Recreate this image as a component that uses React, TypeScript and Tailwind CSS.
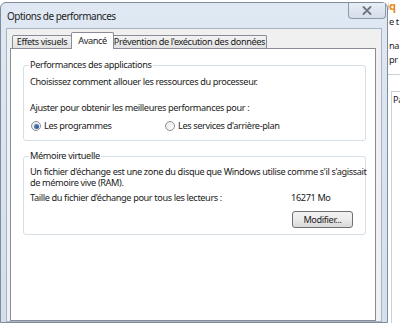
import React from 'react';

const FONT = "font-['Noto_Sans',_'DejaVu_Sans',_sans-serif]";

function Tab({ label, active, className }: { label: string; active?: boolean; className: string }) {
  if (active) {
    return (
      <div
        className={`${className} relative z-10 -mb-px h-[17px] flex items-start justify-center pt-[2px] bg-white border border-b-0 border-[#898c95] rounded-t-[2px] -mx-px whitespace-nowrap`}
      >
        {label}
      </div>
    );
  }
  return (
    <div
      className={`${className} h-[13px] flex items-center justify-center bg-gradient-to-b from-[#f3f3f3] to-[#e2e2e2] border border-b-0 border-[#898c95] rounded-t-[2px] -ml-px first:ml-0 whitespace-nowrap`}
    >
      {label}
    </div>
  );
}

function Radio({ checked }: { checked?: boolean }) {
  return (
    <span className="w-[10px] h-[10px] rounded-full border border-[#8e8f8f] bg-gradient-to-br from-[#e6e6e6] to-white flex items-center justify-center shrink-0">
      {checked && <span className="w-[5px] h-[5px] rounded-full bg-gradient-to-br from-[#5b8ec4] to-[#1d4f8c]" />}
    </span>
  );
}

function Group({ title, children, className = '' }: { title: string; children: React.ReactNode; className?: string }) {
  return (
    <fieldset className={`min-w-0 w-full border border-[#d5dfe5] rounded-[3px] pl-[6px] pr-[12px] ${className}`}>
      <legend className="px-[1px] -ml-[1px] leading-[12px]">{title}</legend>
      {children}
    </fieldset>
  );
}

export default function App() {
  return (
    <div className={`w-[400px] h-[323px] overflow-hidden bg-white flex text-[9.2px] tracking-[-0.38px] text-[#1b1b1b] ${FONT}`}>
      {/* dialog window */}
      <div className="w-[388px] shrink-0 mt-[2px] rounded-t-[6px] border border-[#7f8c9b] bg-gradient-to-b from-[#dfe8f3] to-[#d3dfec] flex flex-col">
        <div className="h-[25px] flex items-start justify-between">
          <span className="pl-[6px] pt-[6px] text-[10px] tracking-[-0.5px] leading-[14px] text-[#1e1e1e]">Options de performances</span>
          <button className="w-[38px] h-[16px] mr-[1px] border border-t-0 border-[#8a99ab] rounded-b-[4px] bg-gradient-to-b from-[#e8eef6] to-[#d4deea] flex items-center justify-center">
            <svg width="10" height="9" viewBox="0 0 10 9">
              <path d="M1.5 1 L8.5 8 M8.5 1 L1.5 8" stroke="#6d747d" strokeWidth="1.8" strokeLinecap="round" />
            </svg>
          </button>
        </div>

        <div className="flex-1 mx-[5px] bg-[#f0f0f0] border border-[#a7b4c4] pl-[3px] pr-[5px] flex flex-col">
          {/* tabs */}
          <div className="h-[19px] flex items-end pl-[2px] leading-[12px]">
            <Tab label="Effets visuels" className="w-[60px]" />
            <Tab label="Avancé" active className="w-[43px]" />
            <Tab label="Prévention de l'exécution des données" className="w-[155px]" />
          </div>

          {/* tab panel */}
          <div className="flex-1 bg-white border border-[#898c95] pl-[12px] pr-[9px] pt-[10px] leading-[12px] whitespace-nowrap">
            <Group title="Performances des applications" className="pb-[8px]">
              <p className="mt-[5px]">Choisissez comment allouer les ressources du processeur.</p>
              <p className="mt-[14px]">Ajuster pour obtenir les meilleures performances pour :</p>
              <div className="mt-[6px] flex items-center">
                <label className="w-[135px] flex items-center gap-[3px] pl-[1px]">
                  <Radio checked />
                  <span>Les programmes</span>
                </label>
                <label className="flex items-center gap-[3px]">
                  <Radio />
                  <span>Les services d'arrière-plan</span>
                </label>
              </div>
            </Group>

            <Group title="Mémoire virtuelle" className="mt-[9px] pb-[6px]">
              <p className="mt-[4px] leading-[11px]">
                Un fichier d'échange est une zone du disque que Windows utilise comme s'il s'agissait
                <br />
                de mémoire vive (RAM).
              </p>
              <div className="mt-[4px] flex">
                <span className="w-[261px]">Taille du fichier d'échange pour tous les lecteurs :</span>
                <span>16271 Mo</span>
              </div>
              <div className="mt-[7px] flex justify-end">
                <button className="w-[61px] h-[17px] border border-[#707070] rounded-[3px] bg-gradient-to-b from-[#f2f2f2] via-[#ebebeb] to-[#d9d9d9] flex items-center justify-center">
                  Modifier...
                </button>
              </div>
            </Group>
          </div>
        </div>
      </div>

      {/* window behind, peeking out */}
      <div className="flex-1 flex flex-col leading-[12px] whitespace-nowrap overflow-hidden">
        <span className="text-[#e8891a] font-bold text-[11px] -ml-[2px]">iq</span>
        <span className="mt-[4px] pl-[1px]">e t</span>
        <span className="mt-[12px] pl-[1px]">na</span>
        <span className="mt-[2px] pl-[1px]">pr</span>
        <div className="mt-[8px] h-px bg-[#c9d2dc]" />
        <div className="mt-[16px] ml-[3px] flex-1 border-l border-t border-[#c9d2dc] bg-white pl-[1px] pt-[2px]">
          <span>Pa</span>
        </div>
      </div>
    </div>
  );
}
